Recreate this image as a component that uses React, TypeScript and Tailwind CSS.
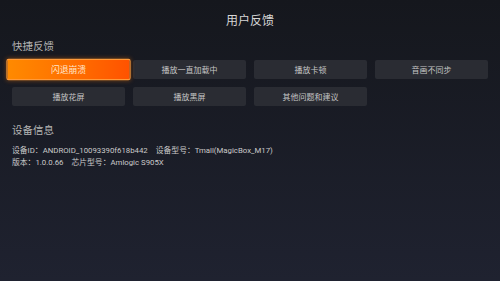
const QUICK_ITEMS = [
  "闪退崩溃",
  "播放一直加载中",
  "播放卡顿",
  "音画不同步",
  "播放花屏",
  "播放黑屏",
  "其他问题和建议",
];

export default function App() {
  const focused = 0;

  return (
    <div
      className="w-[500px] h-[281px] overflow-hidden bg-gradient-to-b from-[#15171d] to-[#1f2230] text-[#c8c8c8]"
      style={{ fontFamily: '"Noto Sans CJK SC", "Noto Sans", sans-serif' }}
    >
      <h1 className="pt-[11px] text-center text-[12px] leading-[18px] text-[#d6d6d6]">
        用户反馈
      </h1>

      <div className="px-3">
        <h2 className="mt-[10px] text-[10.5px] leading-[14px] text-[#b4b4b4]">
          快捷反馈
        </h2>

        <div className="mt-[7px] grid grid-cols-4 gap-x-2 gap-y-2">
          {QUICK_ITEMS.map((label, i) =>
            i === focused ? (
              <button
                key={label}
                className="h-[19px] scale-x-110 scale-y-[1.12] rounded-[2px] border border-[#ff9a3a] bg-gradient-to-r from-[#ff8a00] to-[#ff5200] text-[8px] text-[#ffe6cc] shadow-[0_0_4px_rgba(255,120,0,0.35)]"
              >
                {label}
              </button>
            ) : (
              <button
                key={label}
                className="h-[19px] rounded-[2px] bg-[#2a2c33] text-[8px] text-[#c4c4c4]"
              >
                {label}
              </button>
            ),
          )}
        </div>

        <h2 className="mt-[17px] text-[10.5px] leading-[14px] text-[#b4b4b4]">
          设备信息
        </h2>

        <div
          className="mt-[8px] text-[7.8px] leading-[11.5px] text-[#cacaca]"
          style={{ fontFamily: 'Roboto, "Noto Sans CJK SC", sans-serif' }}
        >
          <p>
            设备ID：ANDROID_10093390f618b442<span className="inline-block w-[8px]" />
            设备型号：Tmall(MagicBox_M17)
          </p>
          <p>
            版本：1.0.0.66<span className="inline-block w-[8px]" />
            芯片型号：Amlogic S905X
          </p>
        </div>
      </div>
    </div>
  );
}
